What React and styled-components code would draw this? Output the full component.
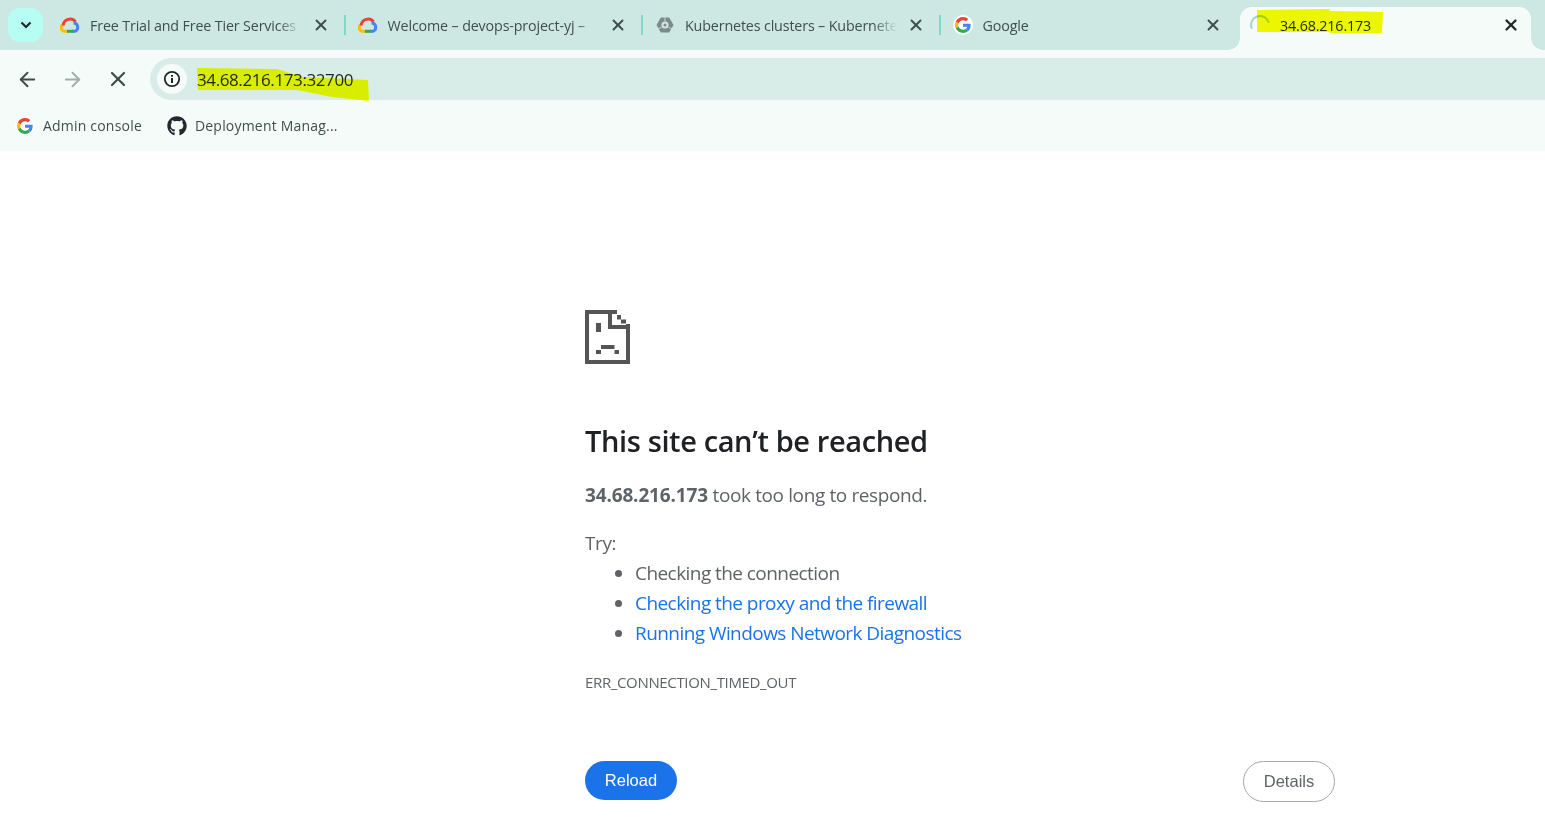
import React from 'react'
import styled, { createGlobalStyle } from 'styled-components'
import { ArrowLeft, ArrowRight, X } from 'lucide-react'
import { FaGithub } from 'react-icons/fa'

const Global = createGlobalStyle`
  html, body { margin: 0; padding: 0; background: #fff; overflow: hidden; }
  body { font-family: "Open Sans", "Noto Sans", sans-serif; }
  * { box-sizing: border-box; }
`

const Strip = styled.div`
  display: flex;
  align-items: flex-end;
  height: 50px;
  padding-left: 8px;
  background: #cde8e2;
`

const TabSearch = styled.div`
  display: flex;
  align-items: center;
  justify-content: center;
  flex: none;
  width: 35px;
  height: 34px;
  margin: 0 6px 8px 0;
  border-radius: 12px;
  background: #b6fdf4;
`

const Tab = styled.div`
  position: relative;
  display: flex;
  align-items: center;
  gap: 10px;
  flex: none;
  width: 297.5px;
  height: 36px;
  margin-bottom: 7px;
  padding: 0 17px 0 11px;
`

const TabSeparator = styled.span`
  position: absolute;
  right: 1px;
  top: 8px;
  width: 2px;
  height: 20px;
  background: #7fd8cc;
`

const ActiveTab = styled.div`
  position: relative;
  display: flex;
  align-items: center;
  gap: 10px;
  flex: none;
  width: 291px;
  height: 43px;
  margin-left: 1px;
  padding: 0 11px 7px 10px;
  border-radius: 12px 12px 0 0;
  background: #f5fbf9;

  &::before, &::after {
    content: '';
    position: absolute;
    bottom: 0;
    width: 12px;
    height: 12px;
  }
  &::before { left: -12px; background: radial-gradient(circle at 0 0, #cde8e2 11.5px, #f5fbf9 12px); }
  &::after { right: -12px; background: radial-gradient(circle at 100% 0, #cde8e2 11.5px, #f5fbf9 12px); }
`

const Title = styled.span`
  flex: 1;
  min-width: 0;
  overflow: hidden;
  white-space: nowrap;
  font-size: 14.3px;
  letter-spacing: -0.15px;
  color: ${p => (p.$active ? '#1f2a28' : '#3f4f4c')};
  ${p => p.$fade && `
    -webkit-mask-image: linear-gradient(to right, #000 calc(100% - 24px), transparent);
    mask-image: linear-gradient(to right, #000 calc(100% - 24px), transparent);
  `}
`

const Close = styled.span`
  display: flex;
  flex: none;
  color: ${p => (p.$active ? '#1f2a28' : '#3f4f4c')};
`

const Favicon = styled.span`
  display: flex;
  align-items: center;
  justify-content: center;
  flex: none;
  width: 20px;
  height: 20px;
  border-radius: 50%;
  background: ${p => (p.$plate ? '#fff' : 'transparent')};
`

const Marker = styled.svg`
  position: absolute;
  left: ${p => p.$left}px;
  top: ${p => p.$top}px;
  mix-blend-mode: multiply;
  pointer-events: none;
`

const Toolbar = styled.div`
  display: flex;
  align-items: center;
  height: 50px;
  padding-top: 8px;
  background: #f5fbf9;
`

const NavButton = styled.span`
  display: flex;
  align-items: center;
  justify-content: center;
  flex: none;
  width: 45px;
  color: ${p => (p.$off ? '#9fb0ac' : '#3c4a48')};
`

const NavGroup = styled.div`
  display: flex;
  flex: none;
  width: 150px;
  padding-left: 5px;
`

const Omnibox = styled.div`
  position: relative;
  flex: 1;
  display: flex;
  align-items: center;
  gap: 10px;
  height: 42px;
  padding-left: 7px;
  border-radius: 21px 0 0 21px;
  background: #d9ede8;
`

const SiteInfo = styled.span`
  display: flex;
  align-items: center;
  justify-content: center;
  flex: none;
  width: 30px;
  height: 30px;
  border-radius: 50%;
  background: #f5fbf9;
`

const Url = styled.span`
  font-size: 17px;
  letter-spacing: -0.4px;
  color: #1f2a28;
`

const Bookmarks = styled.div`
  display: flex;
  align-items: center;
  gap: 25px;
  height: 51px;
  padding-left: 15px;
  background: #f5fbf9;
`

const Bookmark = styled.span`
  display: flex;
  align-items: center;
  gap: 8px;
  font-size: 14px;
  letter-spacing: 0.2px;
  color: #3f4f4c;
`

const Page = styled.main`
  width: 750px;
  height: 679px;
  margin-left: 585px;
  padding-top: 159px;
`

const Heading = styled.h1`
  margin: 52px 0 0;
  font-size: 29px;
  line-height: 40px;
  font-weight: 600;
  letter-spacing: -0.38px;
  color: #202124;
`

const Para = styled.p`
  margin: ${p => p.$top}px 0 0;
  font-size: ${p => p.$size || 19}px;
  line-height: 30px;
  letter-spacing: ${p => p.$track || -0.38}px;
  color: #5f6368;

  b { font-weight: 700; letter-spacing: -0.15px; }
`

const Tips = styled.ul`
  margin: 0;
  padding-left: 50px;
  font-size: 19px;
  line-height: 30px;
  letter-spacing: -0.56px;
  color: #5f6368;
`

const Tip = styled.li`
  color: ${p => (p.$link ? '#1a73e8' : '#5f6368')};
  &::marker { color: #5f6368; }
`

const Actions = styled.div`
  display: flex;
  justify-content: space-between;
  align-items: flex-start;
  margin-top: 64px;
`

const Button = styled.button`
  width: 92px;
  height: ${p => (p.$primary ? 39 : 41)}px;
  padding: 0;
  border: ${p => (p.$primary ? 'none' : '1px solid #a6a8ab')};
  border-radius: 21px;
  background: ${p => (p.$primary ? '#1a73e8' : '#fff')};
  color: ${p => (p.$primary ? '#fff' : '#5f6368')};
  font-family: "Liberation Sans", Arial, sans-serif;
  font-size: 16.5px;
`

const CloudIcon = () => (
  <svg width="20" height="20" viewBox="0 0 20 20" fill="none" strokeWidth="3">
    <path d="M8.500 16.300H5A3.600 3.600 0 0 1 3.200 9.500" stroke="#fbbc05" />
    <path d="M3.200 10.500A6.900 6.900 0 0 1 15.600 6.800" stroke="#ea4335" />
    <path d="M13.500 8A4.300 4.300 0 0 1 15 16.300H12" stroke="#4285f4" />
    <path d="M7 16.300H13" stroke="#34a853" />
  </svg>
)

const KubeIcon = () => (
  <svg width="20" height="20" viewBox="0 0 20 20" fill="none">
    <path d="M5.800 2.500h8.400l4.300 7.500-4.300 7.500H5.800L1.500 10z" fill="#7d8a88" />
    <circle cx="10" cy="10" r="3.600" fill="#cde8e2" />
    <circle cx="10" cy="10" r="1.500" fill="#7d8a88" />
    <path d="M10 2.500v4M2.800 14.200l3.600-2M17.200 14.200l-3.600-2" stroke="#cde8e2" strokeWidth="0.9" />
  </svg>
)

const GoogleIcon = ({ size = 16 }) => (
  <svg width={size} height={size} viewBox="0 0 48 48">
    <path fill="#EA4335" d="M24 9.5c3.54 0 6.71 1.22 9.21 3.6l6.85-6.85C35.9 2.38 30.47 0 24 0 14.62 0 6.51 5.38 2.56 13.22l7.98 6.19C12.43 13.72 17.74 9.5 24 9.5z" />
    <path fill="#4285F4" d="M46.98 24.55c0-1.57-.15-3.09-.38-4.55H24v9.02h12.94c-.58 2.96-2.26 5.48-4.78 7.18l7.73 6c4.51-4.18 7.09-10.36 7.09-17.65z" />
    <path fill="#FBBC05" d="M10.53 28.59c-.5-1.45-.78-2.99-.78-4.59s.27-3.14.78-4.59l-7.98-6.19C.92 16.46 0 20.12 0 24c0 3.88.92 7.54 2.56 10.78l7.97-6.19z" />
    <path fill="#34A853" d="M24 48c6.48 0 11.93-2.13 15.89-5.81l-7.73-6c-2.15 1.45-4.92 2.3-8.16 2.3-6.26 0-11.57-4.22-13.47-9.91l-7.98 6.19C6.51 42.62 14.62 48 24 48z" />
  </svg>
)

const Spinner = () => (
  <svg width="20" height="20" viewBox="0 0 20 20" fill="none">
    <path d="M1.600 13A9 9 0 0 1 18.600 7" stroke="#a8d2ca" strokeWidth="2" strokeLinecap="round" />
  </svg>
)

const InfoIcon = () => (
  <svg width="18" height="18" viewBox="0 0 18 18" fill="none" stroke="#1f2a28">
    <circle cx="9" cy="9" r="7.200" strokeWidth="1.800" />
    <path d="M9 8v5M9 5v1.800" strokeWidth="2" />
  </svg>
)

const SadFile = () => (
  <svg width="45" height="54" viewBox="0 0 45 54" fill="#555">
    <path fillRule="evenodd" d="M0 0h32v4H4v46h37V14h4v40H0z" />
    <path d="M23 4h4v11h18v4H23zM32 5h4v4.500h-4zM36 9.500h5v4h-5zM11 13h5v9h-5zM16 35h13.500v4H16zM11 40h5v4h-5zM29.500 40H34v4h-4.500z" />
  </svg>
)

const tabs = [
  { title: 'Free Trial and Free Tier Services', icon: <CloudIcon /> },
  { title: 'Welcome – devops-project-yj –', icon: <CloudIcon /> },
  { title: 'Kubernetes clusters – Kubernetes', icon: <KubeIcon /> },
  { title: 'Google', icon: <GoogleIcon />, plate: true, last: true },
]

export default function App() {
  return (
    <>
      <Global />
      <Strip>
        <TabSearch>
          <svg width="12" height="8" viewBox="0 0 12 8" fill="none" stroke="#1f2a28" strokeWidth="2.200">
            <path d="M1.500 1.500 6 6l4.500-4.500" />
          </svg>
        </TabSearch>
        {tabs.map(t => (
          <Tab key={t.title}>
            <Favicon $plate={t.plate}>{t.icon}</Favicon>
            <Title $fade={!t.last}>{t.title}</Title>
            <Close><X size={18} strokeWidth={2.6} /></Close>
            {!t.last && <TabSeparator />}
          </Tab>
        ))}
        <ActiveTab>
          <Favicon><Spinner /></Favicon>
          <Title $active>34.68.216.173</Title>
          <Close $active><X size={18} strokeWidth={3} /></Close>
          <Marker $left={17} $top={2} width="126" height="24" viewBox="0 0 126 24">
            <path d="M0 1 72 0l1 2 53 1-1 21-52 0-1-1H0z" fill="#f5fa00" />
          </Marker>
        </ActiveTab>
      </Strip>

      <Toolbar>
        <NavGroup>
          <NavButton><ArrowLeft size={23} strokeWidth={2} /></NavButton>
          <NavButton $off><ArrowRight size={23} strokeWidth={2} /></NavButton>
          <NavButton><X size={24} strokeWidth={2.200} /></NavButton>
        </NavGroup>
        <Omnibox>
          <SiteInfo><InfoIcon /></SiteInfo>
          <Url>34.68.216.173:32700</Url>
          <Marker $left={47} $top={10} width="172" height="34" viewBox="0 0 172 34">
            <path d="M0 0 80 1l26 8 65 3 1 21-37-4-35-7H1z" fill="#ffff00" />
          </Marker>
        </Omnibox>
      </Toolbar>

      <Bookmarks>
        <Bookmark>
          <Favicon $plate><GoogleIcon /></Favicon>
          Admin console
        </Bookmark>
        <Bookmark>
          <Favicon><FaGithub size={20} color="#24292f" /></Favicon>
          Deployment Manag...
        </Bookmark>
      </Bookmarks>

      <Page>
        <SadFile />
        <Heading>This site can’t be reached</Heading>
        <Para $top={19}><b>34.68.216.173</b> took too long to respond.</Para>
        <Para $top={18}>Try:</Para>
        <Tips>
          <Tip>Checking the connection</Tip>
          <Tip $link>Checking the proxy and the firewall</Tip>
          <Tip $link>Running Windows Network Diagnostics</Tip>
        </Tips>
        <Para $top={19} $size={15} $track={-0.35}>ERR_CONNECTION_TIMED_OUT</Para>
        <Actions>
          <Button $primary>Reload</Button>
          <Button>Details</Button>
        </Actions>
      </Page>
    </>
  )
}
